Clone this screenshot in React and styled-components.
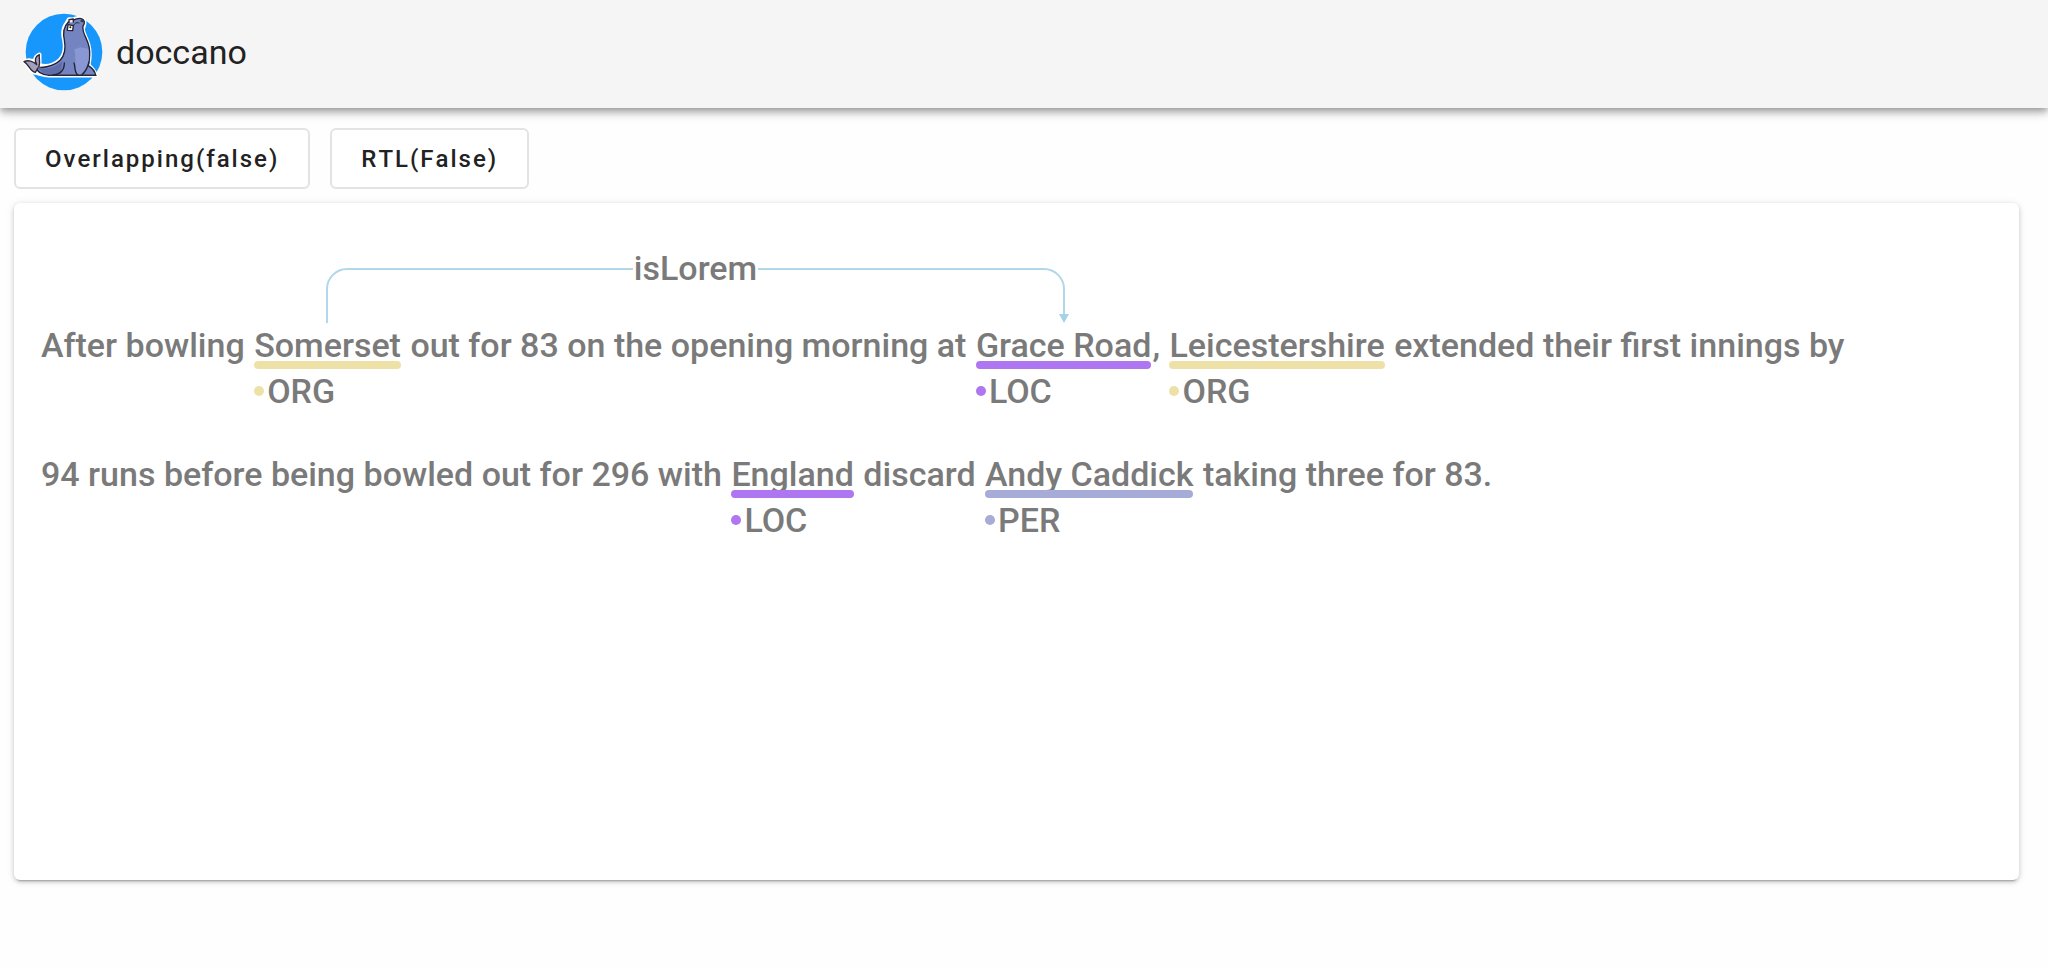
import { useLayoutEffect, useRef, useState } from "react";
import styled, { createGlobalStyle } from "styled-components";

const colors = {
  ORG: "#eee1a8",
  LOC: "#ae76f0",
  PER: "#a6abd8",
};

const lines = [
  [
    { text: "After bowling " },
    { id: "somerset", text: "Somerset", label: "ORG" },
    { text: " out for 83 on the opening morning at " },
    { id: "grace-road", text: "Grace Road", label: "LOC" },
    { text: ", " },
    { id: "leicestershire", text: "Leicestershire", label: "ORG" },
    { text: " extended their first innings by" },
  ],
  [
    { text: "94 runs before being bowled out for 296 with " },
    { id: "england", text: "England", label: "LOC" },
    { text: " discard " },
    { id: "andy-caddick", text: "Andy Caddick", label: "PER" },
    { text: " taking three for 83." },
  ],
];

const relation = { from: "somerset", to: "grace-road", label: "isLorem" };

function Logo() {
  return (
    <LogoSvg viewBox="36 22 246 238" role="img" aria-label="doccano logo">
      <circle cx="162" cy="141" r="115" fill="#1797fb" />
      <g strokeLinejoin="round" strokeLinecap="round">
        <path
          d="M42 170C54 164 68 166 78 174C74 164 76 155 88 149C87 160 90 168 87 180C108 188 132 180 149 166C164 152 168 132 163 105C158 86 161 66 170 55L177 43L190 44C202 36 216 39 222 48C226 57 219 64 218 74C220 88 230 102 235 120C241 142 238 166 235 180C244 188 254 198 257 211H116C98 211 82 202 74 203C60 202 60 181 42 170Z"
          fill="#fff"
          stroke="#fff"
          strokeWidth="13"
        />
        <path
          d="M74 183C88 192 130 186 151 165C165 150 168 132 163 105C158 82 164 62 175 51C190 46 202 37 214 41C224 44 226 55 219 63C215 82 231 98 237 124C242 149 238 168 235 182C245 188 255 199 257 211H118C96 209 79 199 74 183Z"
          fill="#7484c0"
          stroke="#202137"
          strokeWidth="4"
        />
        <path
          d="M42 170C54 164 70 168 80 179C73 166 75 154 88 149C86 160 92 169 87 184L76 202C60 201 59 180 42 170Z"
          fill="#a3a0bd"
          stroke="#30252f"
          strokeWidth="4"
        />
        <path
          d="M193 133L211 127L235 131C239 151 236 168 232 188L212 207H203C189 196 201 166 193 133Z"
          fill="#8998d2"
        />
        <path
          d="M84 185C108 197 137 188 157 168L152 208H116C98 204 88 197 84 185Z"
          fill="#5f6ea8"
        />
        <path
          d="M163 174C163 194 151 208 128 210M192 174C197 187 192 202 204 210M237 171C232 190 226 201 216 209"
          fill="none"
          stroke="#242338"
          strokeWidth="4"
        />
        <path d="M116 211H258" stroke="#30252f" strokeWidth="4" />
        <path d="M177 53V44L190 42V51" fill="#eee" stroke="#25232d" strokeWidth="4" />
        <path
          d="M174 59L190 62L188 77L172 76Z"
          fill="#fff"
          stroke="#25232d"
          strokeWidth="4"
        />
        <path d="M190 62C194 54 201 51 207 54" fill="none" stroke="#25232d" strokeWidth="3" />
        <circle cx="181" cy="67" r="3" fill="#161620" />
        <ellipse cx="217" cy="48" rx="6" ry="4" fill="#363956" />
      </g>
    </LogoSvg>
  );
}

function Entity({ text, label, innerRef }) {
  return (
    <EntityBox ref={innerRef}>
      <span>{text}</span>
      <Underline $color={colors[label]} />
      <EntityLabel>
        <Dot $color={colors[label]} />
        {label}
      </EntityLabel>
    </EntityBox>
  );
}

function Arc({ left, top, width, label }) {
  const height = 55;
  const labelRef = useRef(null);
  const [gap, setGap] = useState(0);

  useLayoutEffect(() => {
    setGap(labelRef.current.offsetWidth);
  }, [label]);

  const gapStart = (width - gap) / 2;
  const gapEnd = (width + gap) / 2;

  return (
    <ArcBox style={{ left, top: top - height, width }}>
      <ArcSvg width={width} height={height}>
        <path d={`M0 ${height}V21A20 20 0 0 1 20 1H${gapStart}`} />
        <path d={`M${gapEnd} 1H${width - 20}A20 20 0 0 1 ${width} 21V${height - 8}`} />
        <polygon
          points={`${width - 5},${height - 9} ${width + 5},${height - 9} ${width},${height}`}
        />
      </ArcSvg>
      <ArcLabel ref={labelRef}>{label}</ArcLabel>
    </ArcBox>
  );
}

export default function App() {
  const [overlapping, setOverlapping] = useState(false);
  const [rtl, setRtl] = useState(false);
  const [arc, setArc] = useState(null);
  const entities = useRef({});

  useLayoutEffect(() => {
    function measure() {
      const from = entities.current[relation.from];
      const to = entities.current[relation.to];
      const a = from.offsetLeft + from.offsetWidth / 2;
      const b = to.offsetLeft + to.offsetWidth / 2;
      setArc({
        left: Math.floor(Math.min(a, b)),
        top: from.offsetTop - 6,
        width: Math.round(Math.abs(b - a)),
      });
    }
    measure();
    window.addEventListener("resize", measure);
    document.fonts.ready.then(measure);
    return () => window.removeEventListener("resize", measure);
  }, [rtl]);

  return (
    <>
      <GlobalStyle />
      <Header>
        <Logo />
        <Title>doccano</Title>
      </Header>
      <Main>
        <Toolbar>
          <Button onClick={() => setOverlapping(!overlapping)}>
            Overlapping({overlapping ? "true" : "false"})
          </Button>
          <Button onClick={() => setRtl(!rtl)}>RTL({rtl ? "True" : "False"})</Button>
        </Toolbar>
        <Card dir={rtl ? "rtl" : "ltr"}>
          {lines.map((line, i) => (
            <Line key={i}>
              {line.map((part) =>
                part.label ? (
                  <Entity
                    key={part.id}
                    text={part.text}
                    label={part.label}
                    innerRef={(el) => {
                      entities.current[part.id] = el;
                    }}
                  />
                ) : (
                  part.text
                )
              )}
            </Line>
          ))}
          {arc && <Arc {...arc} label={relation.label} />}
        </Card>
      </Main>
    </>
  );
}

const GlobalStyle = createGlobalStyle`
  * {
    box-sizing: border-box;
  }
  body {
    margin: 0;
    background-color: #fefefe;
    font-family: Roboto, "Liberation Sans", sans-serif;
    color: #222;
  }
`;

const Header = styled.header`
  display: flex;
  align-items: center;
  gap: 12px;
  height: 108px;
  padding: 0 22px 4px;
  background-color: #f5f5f5;
  box-shadow: 0 3px 7px -1px rgba(0, 0, 0, 0.3), 0 6px 8px rgba(0, 0, 0, 0.12),
    0 2px 16px rgba(0, 0, 0, 0.1);
`;

const LogoSvg = styled.svg`
  width: 82px;
  height: 80px;
  flex-shrink: 0;
`;

const Title = styled.h1`
  margin: 0;
  font-size: 34px;
  line-height: 48px;
  font-weight: 400;
`;

const Main = styled.main`
  padding: 20px 29px 28px 14px;
`;

const Toolbar = styled.div`
  display: flex;
  gap: 20px;
  margin-bottom: 14px;
`;

const Button = styled.button`
  height: 61px;
  padding: 0 29px;
  border: 2px solid #e3e3e3;
  border-radius: 6px;
  background-color: #fff;
  color: #222;
  font-family: inherit;
  font-size: 24px;
  font-weight: 500;
  font-kerning: none;
  letter-spacing: 2px;
  cursor: pointer;
`;

const Card = styled.section`
  position: relative;
  min-height: 677px;
  padding: 126px 27px 40px;
  border-radius: 6px;
  background-color: #fff;
  box-shadow: 0 4px 2px -3px rgba(0, 0, 0, 0.25), 0 2px 4px rgba(0, 0, 0, 0.16),
    0 1px 8px rgba(0, 0, 0, 0.1);
`;

const Line = styled.p`
  margin: 0 0 51px;
  color: #7a7a7a;
  font-size: 34px;
  font-weight: 500;
  line-height: 32px;
  white-space: pre-wrap;
`;

const EntityBox = styled.span`
  display: inline-flex;
  flex-direction: column;
  margin: 0 1px;
  white-space: nowrap;
`;

const Underline = styled.span`
  height: 8px;
  margin-bottom: 6px;
  border-radius: 4px;
  background-color: ${(props) => props.$color};
  z-index: 1;
`;

const EntityLabel = styled.span`
  display: flex;
  align-items: center;
  gap: 3px;
`;

const Dot = styled.span`
  width: 10px;
  height: 10px;
  border-radius: 50%;
  background-color: ${(props) => props.$color};
`;

const ArcBox = styled.div`
  position: absolute;
  display: flex;
  justify-content: center;
`;

const ArcSvg = styled.svg`
  position: absolute;
  left: 0;
  top: 0;
  overflow: visible;

  path {
    fill: none;
    stroke: #b0d7ea;
    stroke-width: 2px;
  }

  polygon {
    fill: #a6d2e8;
  }
`;

const ArcLabel = styled.span`
  margin-top: -16px;
  padding: 0 1px;
  color: #7a7a7a;
  font-size: 34px;
  font-weight: 500;
  line-height: 32px;
`;
